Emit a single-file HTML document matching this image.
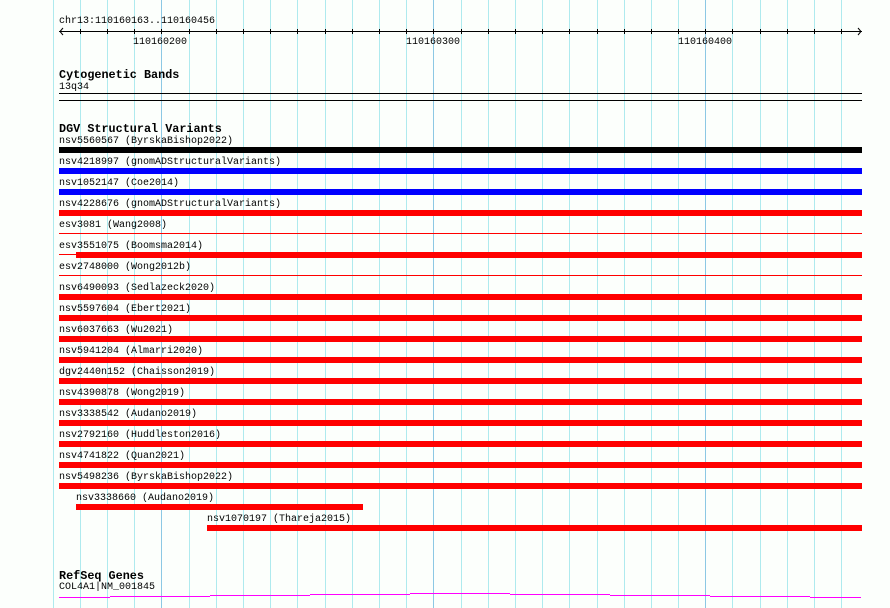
<!DOCTYPE html>
<html><head><meta charset="utf-8"><style>
html,body{margin:0;padding:0;background:#fcfffc;width:890px;height:608px;overflow:hidden;position:relative;font-family:"Liberation Mono","DejaVu Sans Mono",monospace;}
.t{position:absolute;font-size:10px;line-height:10px;color:#000;white-space:pre;margin-top:1px;}
.h{position:absolute;font-size:11.8px;line-height:12px;font-weight:bold;color:#000;white-space:pre;margin-top:1px;}
svg{position:absolute;left:0;top:0;}
</style></head><body>
<svg width="890" height="608" viewBox="0 0 890 608" shape-rendering="crispEdges">
<g id="grid"></g>
</svg>
<script>
(function(){
var g=document.getElementById('grid');var s='';
for(var k=0;k<30;k++){var x=Math.round(52.7+27.19*k);if(x>865)break;
var dark=(k==4||k==14||k==24);
s+='<rect x="'+x+'" y="0" width="1" height="608" fill="'+(dark?'#8cc8e4':'#aeeaee')+'"/>';}
s+='<rect x="59" y="31" width="803" height="1" fill="#000"/>';
s+='<path d="M63 28 L60 31.5 L63 35" stroke="#000" fill="none" shape-rendering="auto"/>';
s+='<path d="M858 28 L861 31.5 L858 35" stroke="#000" fill="none" shape-rendering="auto"/>';
for(var k=1;k<30;k++){var x=Math.round(52.7+27.19*k);if(x>845)break;s+='<rect x="'+x+'" y="29" width="1" height="5" fill="#000"/>';}
s+='<rect x="59" y="93" width="803" height="1" fill="#000"/><rect x="59" y="100" width="803" height="1" fill="#000"/>';
var cols=['#000','#00f','#00f','#f00'];
for(var k=0;k<17;k++){var y=147+21*k;
if(k==4||k==6){s+='<rect x="59" y="'+(y+2)+'" width="803" height="1" fill="#f00"/>';continue;}
if(k==5){s+='<rect x="59" y="'+(y+2)+'" width="17" height="1" fill="#f00"/><rect x="76" y="'+y+'" width="786" height="6" fill="#f00"/>';continue;}
s+='<rect x="59" y="'+y+'" width="803" height="6" fill="'+(cols[k]||'#f00')+'"/>';}
s+='<rect x="76" y="504" width="287" height="6" fill="#f00"/>';
s+='<rect x="207" y="525" width="655" height="6" fill="#f00"/>';
var segs=[[59,110,597],[110,210,596],[210,310,595],[310,410,594],[410,510,593],[510,610,594],[610,710,595],[710,810,596],[810,861,597]];
segs.forEach(function(a){s+='<rect x="'+a[0]+'" y="'+a[2]+'" width="'+(a[1]-a[0])+'" height="1" fill="#f0f"/>';});
g.innerHTML=s;
})();
</script>
<div class="t" style="left:59px;top:16px">chr13:110160163..110160456</div>
<div class="t" style="left:133px;top:37px">110160200</div>
<div class="t" style="left:406px;top:37px">110160300</div>
<div class="t" style="left:678px;top:37px">110160400</div>
<div class="h" style="left:59px;top:68px">Cytogenetic Bands</div>
<div class="t" style="left:59px;top:82px">13q34</div>
<div class="h" style="left:59px;top:122px">DGV Structural Variants</div>
<div class="t" style="left:59px;top:136px">nsv5560567 (ByrskaBishop2022)</div>
<div class="t" style="left:59px;top:157px">nsv4218997 (gnomADStructuralVariants)</div>
<div class="t" style="left:59px;top:178px">nsv1052147 (Coe2014)</div>
<div class="t" style="left:59px;top:199px">nsv4228676 (gnomADStructuralVariants)</div>
<div class="t" style="left:59px;top:220px">esv3081 (Wang2008)</div>
<div class="t" style="left:59px;top:241px">esv3551075 (Boomsma2014)</div>
<div class="t" style="left:59px;top:262px">esv2748000 (Wong2012b)</div>
<div class="t" style="left:59px;top:283px">nsv6490093 (Sedlazeck2020)</div>
<div class="t" style="left:59px;top:304px">nsv5597604 (Ebert2021)</div>
<div class="t" style="left:59px;top:325px">nsv6037663 (Wu2021)</div>
<div class="t" style="left:59px;top:346px">nsv5941204 (Almarri2020)</div>
<div class="t" style="left:59px;top:367px">dgv2440n152 (Chaisson2019)</div>
<div class="t" style="left:59px;top:388px">nsv4390878 (Wong2019)</div>
<div class="t" style="left:59px;top:409px">nsv3338542 (Audano2019)</div>
<div class="t" style="left:59px;top:430px">nsv2792160 (Huddleston2016)</div>
<div class="t" style="left:59px;top:451px">nsv4741822 (Quan2021)</div>
<div class="t" style="left:59px;top:472px">nsv5498236 (ByrskaBishop2022)</div>
<div class="t" style="left:76px;top:493px">nsv3338660 (Audano2019)</div>
<div class="t" style="left:207px;top:514px">nsv1070197 (Thareja2015)</div>
<div class="h" style="left:59px;top:569px">RefSeq Genes</div>
<div class="t" style="left:59px;top:582px">COL4A1|NM_001845</div>
</body></html>
